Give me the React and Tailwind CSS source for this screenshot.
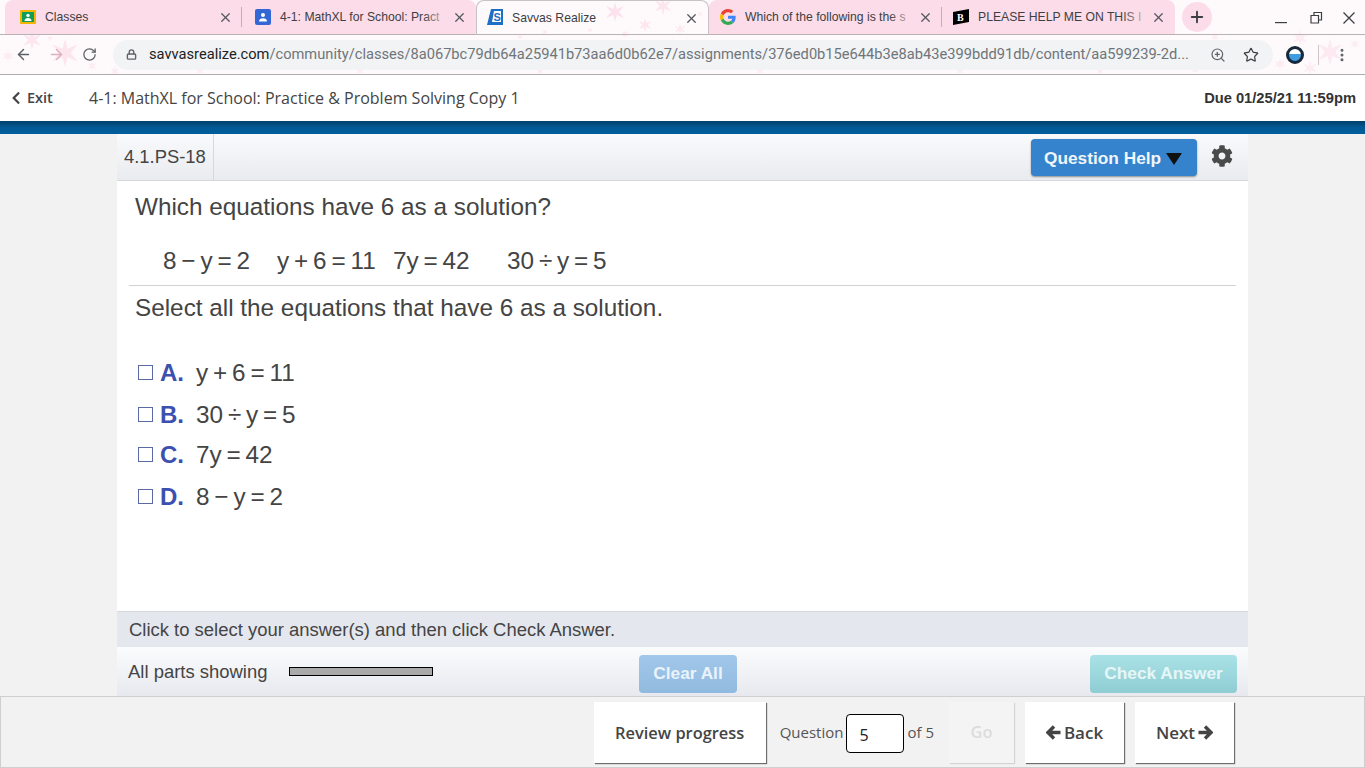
import React from "react";
import { ArrowLeft, ArrowRight, RotateCw, Lock, ZoomIn, Star, X, Plus, MoreVertical } from "lucide-react";
import { FaCog, FaChevronLeft } from "react-icons/fa";

const arial = "font-['Liberation_Sans',Arial,sans-serif]";
const opensans = "font-['Open_Sans',sans-serif]";

const Sparkle = ({ x, y, s, o = 1 }) => (
  <path
    transform={`translate(${x} ${y}) scale(${s})`}
    opacity={o}
    fill="#fcdde9"
    d="M0 -10 L1.800 -3 L9 -6 L4 0 L9 6 L1.800 3 L0 10 L-1.800 3 L-9 6 L-4 0 L-9 -6 L-1.800 -3 Z"
  />
);

const stars = [
  [32, 40, 1, 0.7], [65, 53, 1.4, 0.75], [8, 56, 0.6, 0.5], [92, 66, 0.5, 0.5], [50, 38, 0.3, 0.6],
  [115, 71, 0.5, 0.5], [200, 71, 0.4, 0.5], [360, 71, 0.4, 0.5], [540, 71, 0.4, 0.5], [760, 71, 0.4, 0.5],
  [960, 71, 0.4, 0.5], [1100, 71, 0.4, 0.5], [1300, 38, 0.8, 0.5], [1330, 52, 1.300, 0.6], [1355, 44, 0.5, 0.5],
  [1280, 64, 0.6, 0.5], [1310, 68, 0.7, 0.5], [1215, 37, 0.4, 0.5], [1195, 70, 0.4, 0.5],
  [615, 12, 1, 0.85], [663, 6, 0.9, 0.75], [645, 25, 0.7, 0.7], [680, 29, 0.6, 0.6], [625, 34, 0.4, 0.6],
  [545, 32, 0.3, 0.6], [590, 30, 0.3, 0.6], [520, 37, 0.3, 0.6], [700, 14, 0.3, 0.5],
];

const Tab = ({ icon, title, fade = true, className }) => (
  <div className={`relative flex items-center h-[34px] shrink-0 ${className}`}>
    <span className="w-4 h-4 shrink-0 flex items-center justify-center">{icon}</span>
    <span className={`ml-[9px] flex-1 min-w-0 overflow-hidden whitespace-nowrap text-[12.2px] text-[#3c4043] ${arial}`}>
      {title}
    </span>
    {fade && <span className="absolute right-[15px] top-2 w-7 h-5 bg-gradient-to-r from-transparent to-[#fcdce8]" />}
    <X size={15} strokeWidth={2} className="relative shrink-0 -mr-px text-[#54575b]" />
  </div>
);

const Divider = () => <span className="block w-px h-5 bg-[#c9a9b6] shrink-0" />;

const BrowserChrome = () => (
  <div className="relative h-[75px] bg-[#fefafc] border-b border-[#b0acae] overflow-hidden">
    <svg className="absolute inset-0 w-full h-full" aria-hidden="true">
      {stars.map(([x, y, s, o], i) => <Sparkle key={i} x={x} y={y} s={s} o={o} />)}
    </svg>
    <div className="relative flex items-start h-[35px] border-b border-[#b9b2b5]">
      <div className="flex items-center h-[34px] ml-[5px] w-[471px] pl-[15px] bg-[#fcdce8] rounded-t-lg">
        <Tab
          className="w-[212px]"
          fade={false}
          title="Classes"
          icon={
            <svg width="16" height="16" viewBox="0 0 16 16">
              <rect width="16" height="14" y="1" rx="1" fill="#f4b400" />
              <rect x="2" y="3" width="12" height="10" fill="#0f9d58" />
              <circle cx="8" cy="6.500" r="1.700" fill="#fff" />
              <path d="M4.500 12c0-2 1.500-3 3.500-3s3.500 1 3.500 3z" fill="#fff" />
            </svg>
          }
        />
        <span className="ml-[9px] mr-[13px]"><Divider /></span>
        <Tab
          className="w-[211px]"
          title="4-1: MathXL for School: Pract"
          icon={
            <svg width="16" height="16" viewBox="0 0 16 16">
              <rect width="16" height="16" rx="2" fill="#3367d6" />
              <circle cx="8" cy="6" r="2" fill="#fff" />
              <path d="M4 12.500c0-2.200 1.800-3.300 4-3.300s4 1.100 4 3.300z" fill="#fff" />
            </svg>
          }
        />
      </div>
      <div className="flex items-center h-[35px] w-[233px] px-[10px] border-x border-t border-[#c7c2c5] rounded-t-lg">
        <Tab
          className="w-full"
          fade={false}
          title="Savvas Realize"
          icon={
            <svg width="16" height="18" viewBox="0 0 16 18">
              <path d="M4 0h12v16H0z" fill="#1c6fc4" />
              <path d="M7 2h7v11H5z" fill="#fff" />
              <text x="6.500" y="12" fontSize="11" fontWeight="700" fill="#1c6fc4" fontFamily="Liberation Sans">S</text>
            </svg>
          }
        />
      </div>
      <div className="flex items-center h-[34px] w-[466px] pl-[11px] bg-[#fcdce8] rounded-t-lg">
        <Tab
          className="w-[212px]"
          title="Which of the following is the s"
          icon={
            <svg width="16" height="16" viewBox="0 0 48 48">
              <path fill="#ea4335" d="M24 9.500c3.500 0 6.700 1.200 9.200 3.600l6.900-6.900C35.900 2.400 30.400 0 24 0 14.600 0 6.500 5.400 2.600 13.200l8 6.200C12.500 13.700 17.800 9.500 24 9.500z" />
              <path fill="#4285f4" d="M47 24.500c0-1.600-.1-3.100-.4-4.500H24v9h12.900c-.6 3-2.200 5.500-4.700 7.200l7.700 6C44.400 37.900 47 31.800 47 24.500z" />
              <path fill="#fbbc05" d="M10.600 28.600A14.500 14.500 0 0 1 10.600 19.400l-8-6.200a24 24 0 0 0 0 21.600z" />
              <path fill="#34a853" d="M24 48c6.500 0 11.900-2.100 15.900-5.800l-7.700-6c-2.200 1.500-4.900 2.300-8.200 2.300-6.200 0-11.500-4.200-13.400-9.900l-8 6.200C6.500 42.600 14.600 48 24 48z" />
            </svg>
          }
        />
        <span className="ml-[9px] mr-[11px]"><Divider /></span>
        <Tab
          className="w-[212px]"
          title="PLEASE HELP ME ON THIS I"
          icon={
            <svg width="16" height="16" viewBox="0 0 16 16">
              <path d="M0 3L16 0v13L0 16z" fill="#000" />
              <text x="4" y="12" fontSize="10" fontWeight="700" fill="#fff" fontFamily="Liberation Serif">B</text>
            </svg>
          }
        />
      </div>
      <button className="ml-[7px] mt-[2px] w-[30px] h-[30px] rounded-full bg-[#fcdce8] flex items-center justify-center text-[#3c4043]">
        <Plus size={18} strokeWidth={2.500} />
      </button>
      <div className="ml-auto flex items-center h-[34px] text-[#3c4043]">
        <svg width="12" height="12" viewBox="0 0 12 12" className="mt-[11px] mr-[23px]">
          <rect y="5" width="12" height="1.200" fill="#3c4043" />
        </svg>
        <svg width="13" height="13" viewBox="0 0 13 13" fill="none" stroke="#3c4043" strokeWidth="1.200" className="mr-[20px]">
          <path d="M1 4.500h7.500V12H1z" />
          <path d="M4 4V1.500h7.500V9H9" />
        </svg>
        <svg width="12" height="12" viewBox="0 0 12 12" stroke="#3c4043" strokeWidth="1.300" className="mt-[2px] mr-[10px]">
          <path d="M0.500 0.500l11 11M11.500 0.500l-11 11" />
        </svg>
      </div>
    </div>
    <div className="relative flex items-center h-[39px]">
      <ArrowLeft size={17} strokeWidth={2} className="ml-[15px] text-[#5c5f63]" />
      <ArrowRight size={17} strokeWidth={2} className="ml-[16px] text-[#d9b0c0]" />
      <RotateCw size={15} strokeWidth={2} className="ml-[17px] text-[#5c5f63]" />
      <div className="ml-[16px] flex items-center h-[30px] w-[1160px] pl-[13px] bg-[#f1f3f4] rounded-full">
        <Lock size={11} strokeWidth={3} className="text-[#5f6368] shrink-0" />
        <span className="ml-[12px] mt-px w-[1045px] whitespace-nowrap overflow-hidden text-[14.66px] text-[#70757a] font-['Roboto',sans-serif]">
          <span className="text-[#202124]">savvasrealize.com</span>/community/classes/8a067bc79db64a25941b73aa6d0b62e7/assignments/376ed0b15e644b3e8ab43e399bdd91db/content/aa599239-2d...
        </span>
        <ZoomIn size={16} strokeWidth={1.800} className="ml-[16px] text-[#5f6368] shrink-0" />
        <Star size={16} strokeWidth={1.800} className="ml-[17px] text-[#3c4043] shrink-0" />
      </div>
      <span className="ml-[13px] w-[18px] h-[18px] rounded-full border-[3px] border-[#16283a] bg-[linear-gradient(#fff_45%,#3f9ce0_45%)] shrink-0" />
      <span className="ml-[14px] w-px h-5 bg-[#cfc5c9]" />
      <MoreVertical size={16} strokeWidth={2.500} className="ml-[15px] text-[#5f6368]" />
    </div>
  </div>
);

const Option = ({ letter, children, className }) => (
  <div className={`flex items-center h-8 ${className}`}>
    <span className="w-[15px] h-[15px] -mt-[2px] border border-[#5b6aa6] shrink-0" />
    <span className={`ml-[7px] w-9 text-2xl font-bold text-[#3c50b0] ${arial}`}>{letter}</span>
    {children}
  </div>
);

const Eq = ({ className, children }) => (
  <span className={`text-[24.3px] text-[#444] [word-spacing:-1.900px] whitespace-pre ${arial} ${className}`}>{children}</span>
);

const NavArrow = ({ flip }) => (
  <svg width="15" height="15" viewBox="0 0 15 15" className={flip ? "rotate-180" : ""}>
    <path d="M8 1.500L2 7.500l6 6M2.500 7.500H14.500" fill="none" stroke="#444" strokeWidth="3.400" />
  </svg>
);

export default function App() {
  return (
    <div className="w-[1365px] h-[768px] flex flex-col overflow-hidden bg-[#f2f2f2]">
      <BrowserChrome />

      <div className="flex items-center justify-between h-[46px] bg-white shrink-0 pl-[9px] pr-[9px]">
        <div className="flex items-center">
          <span className={`flex items-center w-[80px] text-[14.500px] font-semibold text-[#444] ${opensans}`}>
            <FaChevronLeft size={14} className="mr-[4px]" />
            Exit
          </span>
          <span className={`text-base text-[#444] ${opensans}`}>4-1: MathXL for School: Practice &amp; Problem Solving Copy 1</span>
        </div>
        <span className={`text-[14.7px] font-bold text-[#333] ${arial}`}>Due 01/25/21 11:59pm</span>
      </div>
      <div className="h-[13px] shrink-0 bg-gradient-to-b from-[#00416b] via-[#005a94] to-[#005f9c]" />

      <div className="w-[1131px] ml-[117px] h-[562px] shrink-0 flex flex-col bg-white">
        <div className="flex items-center h-[47px] shrink-0 border-b border-[#d5d8dc] bg-gradient-to-b from-[#f8fafc] to-[#e9ebef]">
          <div className={`flex items-center h-full pl-[7px] pr-[7px] border-r border-[#d5d8dc] text-[18.4px] text-[#444] ${arial}`}>4.1.PS-18</div>
          <button className={`ml-auto flex items-center w-[166px] h-[37px] pl-[13px] pt-[3px] rounded bg-[#3583cc] shadow-[0_1px_2px_rgba(0,0,0,0.4)] text-[17.3px] font-bold text-[#f0f6fb] ${arial}`}>
            Question Help
            <svg width="16" height="12" viewBox="0 0 16 12" className="ml-[5px]">
              <path d="M0 0h16L8 12z" fill="#111" />
            </svg>
          </button>
          <FaCog size={22} className="ml-[14px] mr-[15px] -mt-[2px] text-[#4a4a4a]" />
        </div>

        <div className="flex-1 flex flex-col px-3">
          <p className={`mt-[10px] ml-[6px] text-[24.3px] leading-8 text-[#444] ${arial}`}>Which equations have 6 as a solution?</p>
          <div className="flex items-center h-8 mt-[22px] ml-[34px]">
            <Eq className="w-[114px]">8 − y = 2</Eq>
            <Eq className="w-[116px]">y + 6 = 11</Eq>
            <Eq className="w-[114px]">7y = 42</Eq>
            <Eq>30 ÷ y = 5</Eq>
          </div>
          <div className="mt-2 border-t border-[#d2d2d2]" />
          <p className={`mt-[6px] ml-[6px] text-[24.3px] leading-8 text-[#444] ${arial}`}>Select all the equations that have 6 as a solution.</p>
          <div className="mt-[33px] ml-[9px] flex flex-col">
            <Option letter="A."><Eq>y + 6 = 11</Eq></Option>
            <Option letter="B." className="mt-[10px]"><Eq>30 ÷ y = 5</Eq></Option>
            <Option letter="C." className="mt-2"><Eq>7y = 42</Eq></Option>
            <Option letter="D." className="mt-[10px]"><Eq>8 − y = 2</Eq></Option>
          </div>
        </div>

        <div className={`flex items-center h-[36px] shrink-0 pl-3 border-t border-[#d5d8dc] bg-[#e4e7ee] text-[18.47px] text-[#444] ${arial}`}>
          Click to select your answer(s) and then click Check Answer.
        </div>
        <div className="flex items-center h-[49px] shrink-0 pl-[11px] pr-[11px] bg-gradient-to-b from-[#fbfcfd] to-[#e7e9ef]">
          <span className={`w-[161px] text-[18.47px] text-[#444] ${arial}`}>All parts showing</span>
          <span className="w-[144px] h-[9px] border border-black bg-[#aaa]" />
          <button className={`ml-[206px] mt-1 h-[38px] w-[98px] rounded bg-gradient-to-b from-[#a2c8ea] to-[#90badf] text-[17.300px] font-bold text-[#eaf3fa] ${arial}`}>Clear All</button>
          <button className={`ml-auto mt-1 h-[38px] w-[147px] rounded bg-gradient-to-b from-[#a9e2e6] to-[#8fcdd3] text-[17.300px] font-bold text-[#e6f6f7] ${arial}`}>Check Answer</button>
        </div>
      </div>

      <div className={`flex-1 flex items-start justify-end pt-[5px] pr-[130px] border-t border-[#cfcfcf] border-b border-x bg-[#f2f2f2] ${opensans}`}>
        <button className="h-[61px] w-[172px] pt-px bg-white shadow-[1px_1px_1px_rgba(0,0,0,0.55)] text-[16.400px] font-semibold text-[#444]">Review progress</button>
        <div className="flex items-center h-[61px] ml-[14px] text-[15px] text-[#555]">
          <span>Question</span>
          <span className="ml-[3px] mt-[2px] flex items-center w-[58px] h-[39px] pl-3 pt-[3px] border border-black rounded bg-white text-base text-[#222]">5</span>
          <span className="ml-[3px]">of 5</span>
        </div>
        <button className="ml-[15px] h-[61px] w-[65px] bg-[#f4f4f4] shadow-[1px_1px_1px_rgba(0,0,0,0.12)] text-[16.400px] font-semibold text-[#dcdcdc]">Go</button>
        <button className="ml-[11px] flex items-center justify-center gap-[3px] h-[61px] w-[99px] bg-white shadow-[1px_1px_1px_rgba(0,0,0,0.55)] text-[17px] font-semibold text-[#444]">
          <NavArrow />Back
        </button>
        <button className="ml-[11px] flex items-center justify-center gap-[3px] h-[61px] w-[99px] bg-white shadow-[1px_1px_1px_rgba(0,0,0,0.55)] text-[17px] font-semibold text-[#444]">
          Next<NavArrow flip />
        </button>
      </div>
    </div>
  );
}
